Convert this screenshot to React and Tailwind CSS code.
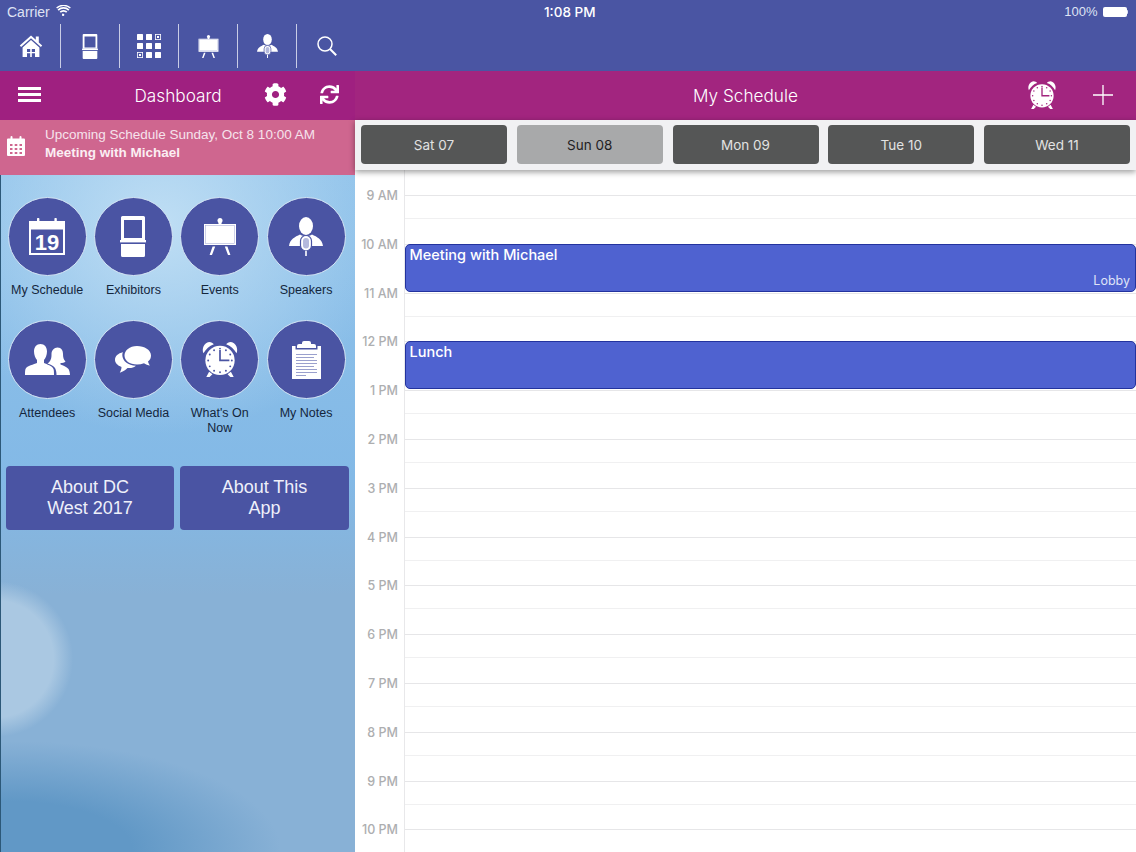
import { FaCog, FaSync } from 'react-icons/fa'

const HORAS = ['9 AM', '10 AM', '11 AM', '12 PM', '1 PM', '2 PM', '3 PM', '4 PM', '5 PM', '6 PM', '7 PM', '8 PM', '9 PM', '10 PM']

const DIAS = [
  { nombre: 'Sat 07' },
  { nombre: 'Sun 08', activo: true },
  { nombre: 'Mon 09' },
  { nombre: 'Tue 10' },
  { nombre: 'Wed 11' },
]

function IconHome({ className }) {
  return (
    <svg viewBox="0 0 24 24" className={className} fill="currentColor">
      <path d="M12 1.500 0.800 11.600l1.300 1.500L12 4.200l9.900 8.900 1.300-1.500-3.400-3.100V2.400h-3v3.400z" />
      <path fillRule="evenodd" d="M12 6 3.600 13.500V23h16.800v-9.500zM8 15h3.200v3H8zm4.800 0H16v3h-3.200zM8 19.200h3.200V23H8zm4.800 0H16V23h-3.200z" />
    </svg>
  )
}

function IconKiosk({ className }) {
  return (
    <svg viewBox="0 0 26 41" className={className} fill="currentColor">
      <path fillRule="evenodd" d="M1 1.500A1.500 1.500 0 0 1 2.500 0h21A1.500 1.500 0 0 1 25 1.500V24H1zM4 4v18h18V4z" />
      <rect x="0" y="24" width="26" height="2.400" />
      <path d="M1 28h24v11.500a1.500 1.500 0 0 1-1.500 1.500h-21A1.500 1.500 0 0 1 1 39.500z" />
    </svg>
  )
}

function IconGrid({ className }) {
  const celdas = [
    [0, 0], [9, 0], [0, 9], [9, 9], [18, 9], [9, 18], [18, 18],
  ]
  return (
    <svg viewBox="0 0 24 24" className={className} fill="currentColor">
      {celdas.map(([x, y]) => (
        <rect key={`${x}-${y}`} x={x} y={y} width="6" height="6" rx="0.500" />
      ))}
      <rect x="18.400" y="0.400" width="5.200" height="5.200" fill="none" stroke="currentColor" strokeWidth="0.800" />
      <rect x="20" y="2" width="2" height="2" />
      <rect x="0.400" y="18.400" width="5.200" height="5.200" fill="none" stroke="currentColor" strokeWidth="0.800" />
      <rect x="2" y="20" width="2" height="2" />
    </svg>
  )
}

function IconEasel({ className }) {
  return (
    <svg viewBox="0 0 32 37" className={className} fill="currentColor">
      <circle cx="16" cy="2.500" r="2.500" />
      <rect x="14.500" y="3" width="3" height="4" />
      <rect x="0" y="6" width="32" height="21" />
      <rect x="1.600" y="7.600" width="28.800" height="17.800" fill="none" stroke="#aeb3da" strokeWidth="0.600" />
      <path d="M8.600 28.500h2.600L8 37H5.600zM20.800 28.500h2.600l3 8.500H24z" />
    </svg>
  )
}

function IconSpeaker({ className }) {
  return (
    <svg viewBox="0 0 34 39" className={className} fill="currentColor">
      <ellipse cx="17" cy="9" rx="7" ry="9" />
      <path d="M11 17.500C6 20 1 22 0 29h34c-1-7-6-9-11-11.500-3 2-9 2-12 0z" />
      <rect x="11.500" y="18.500" width="11" height="15.500" rx="5.500" fill="#ffffff" stroke="#4a54a3" strokeWidth="1.200" />
      <rect x="14" y="21" width="6" height="10.500" rx="3" fill="#b4b9dd" />
      <rect x="16.200" y="34" width="1.600" height="5" />
    </svg>
  )
}

function IconSearch({ className }) {
  return (
    <svg viewBox="0 0 20 20" className={className} fill="none" stroke="currentColor" strokeWidth="1.500">
      <circle cx="8" cy="8" r="7" />
      <path d="m13 13 6.200 6.200" strokeWidth="2" />
    </svg>
  )
}

function IconCalendarDots({ className }) {
  return (
    <svg viewBox="0 0 18 20" className={className} fill="currentColor">
      <path fillRule="evenodd" d="M1 2.500h2.500V1a1 1 0 0 1 2 0v1.500h7V1a1 1 0 0 1 2 0v1.500H17a1 1 0 0 1 1 1V19a1 1 0 0 1-1 1H1a1 1 0 0 1-1-1V3.500a1 1 0 0 1 1-1zM3 8v2h2.500V8zm4.700 0v2h2.600V8zm4.800 0v2H15V8zM3 12v2h2.500v-2zm4.700 0v2h2.600v-2zm4.800 0v2H15v-2zM3 16v2h2.500v-2zm4.700 0v2h2.600v-2zm4.800 0v2H15v-2z" />
    </svg>
  )
}

function IconCalendar19({ className }) {
  return (
    <svg viewBox="0 0 36 37" className={className}>
      <path fill="currentColor" fillRule="evenodd" d="M0 3h8V1a1.200 1.200 0 0 1 2.400 0v2h15V1a1.200 1.200 0 0 1 2.400 0v2H36v34H0zM2 11.500V35h32V11.500z" />
      <text x="18" y="31.500" textAnchor="middle" fill="currentColor" fontSize="22" fontWeight="700" fontFamily="'Liberation Sans', sans-serif">19</text>
    </svg>
  )
}

function IconAttendees({ className }) {
  return (
    <svg viewBox="0 0 45 31" className={className} fill="currentColor">
      <path d="M15.500 0c4 0 6.500 3 6.500 7.500 0 3.500-1.500 7-3 8.500v3c3 1.500 8 2.500 9.500 6 .5 1.500.5 3.500.5 6H0c0-2.500 0-4.500.5-6C2 21.500 9 20.500 12 19v-3c-1.500-1.500-3-5-3-8.500C9 3 11.500 0 15.500 0z" />
      <path d="M32.500 3.500c4 0 5.500 3 5.500 6.500 0 3 .5 5.500 2.500 7.500-1 1-3 1.500-5 1.500v1.500c2.500 1 6 2 8 4.500.8 1.200 1.500 4 1.500 6H31.500c0-3-.5-5-1.500-7-1.300-2.500-5-3.500-7.500-4.500 1.500-1 2.500-2.200 3-3.500 1-2 1-4 1-6 0-3.500 2.500-6.500 6-6.500z" />
    </svg>
  )
}

function IconBubbles({ className }) {
  return (
    <svg viewBox="0 0 36 27" className={className} fill="currentColor">
      <path d="M22 0c7.500 0 14 4 14 9.500 0 2.500-1 4.500-3 6 .3 1.500 1.200 3 2 4-2 0-4.500-1-6-2.200-2.200.8-4.500 1.200-7 1.200-7.500 0-12.500-4-12.500-9S14.500 0 22 0z" />
      <path d="M8 6.300C7.500 7.200 7.300 8 7.300 9c0 5.800 5.700 10.500 13.700 10.700-2 1.700-5 2.700-8.500 2.300-2 2-4.500 3.800-7.700 4.700 1-1.700 1.700-3.700 1.700-5.700C2.500 19.500 0 17 0 13.800 0 10.300 3 7.300 8 6.300z" />
    </svg>
  )
}

function IconAlarm({ className, fondo }) {
  const marcas = [0, 1, 2, 3, 4, 5, 6, 7, 8, 9, 10, 11]
  return (
    <svg viewBox="0 0 40 37" className={className} fill="currentColor">
      <path d="M2.500 12C.5 7 3 1 8.500 0c2.500 0 4 1 5 2.500C8.500 4 5.500 7.500 2.500 12zM37.500 12c2-5-.5-11-6-12-2.500 0-4 1-5 2.500C31.500 4 34.500 7.500 37.500 12z" />
      <circle cx="20" cy="19.500" r="15.500" />
      <path d="M8.500 31.500 5.500 37h3.500l3-3zM31.500 31.500l3 5.500H31l-3-3z" />
      {marcas.map((m) => {
        const a = (m * Math.PI) / 6
        return <circle key={m} cx={20 + 12.500 * Math.sin(a)} cy={19.500 - 12.500 * Math.cos(a)} r="1" fill={fondo} />
      })}
      <path d="M19.100 8.500h1.800v10.100h9v1.800H19.100z" fill={fondo} />
    </svg>
  )
}

function IconNotes({ className }) {
  const lineas = [13, 16, 19, 22, 25, 28, 31, 34]
  return (
    <svg viewBox="0 0 29 38" className={className} fill="currentColor">
      <path d="M10 3V2a2 2 0 0 1 2-2h5a2 2 0 0 1 2 2v1h3a2 2 0 0 1 2 2v2H5V5a2 2 0 0 1 2-2z" />
      <path d="M0 5h3.500v3.500h22V5H29v33H0z" />
      {lineas.map((y, i) => (
        <rect key={y} x="4" y={y} width={i === 7 ? 10 : i % 3 === 1 ? 18 : 21} height="0.900" fill="#8f96c8" />
      ))}
    </svg>
  )
}

function BotonCirculo({ etiqueta, children }) {
  return (
    <div className="flex flex-col items-center">
      <div className="flex h-[79px] w-[79px] items-center justify-center rounded-full border-[1.500px] border-[#d5e6f5] bg-[#4a54a3] text-white">
        {children}
      </div>
      <p className="mt-[7px] text-center text-[12.500px] leading-[14.500px] text-[#14263c]">{etiqueta}</p>
    </div>
  )
}

function CeldaToolbar({ children, ultima }) {
  return (
    <div className={`flex h-[44px] w-[59px] items-center justify-center text-white ${ultima ? '' : 'border-r border-[#c9cde6]'}`}>
      {children}
    </div>
  )
}

function Evento({ titulo, lugar, className }) {
  return (
    <div className={`absolute right-0 left-[49.500px] h-[48px] rounded-[5px] border border-[#23339e] bg-[#4f62d0] font-['Inter',sans-serif] text-white ${className}`}>
      <p className="pl-[4px] pt-[1px] text-[14.500px] font-medium leading-[18px]">{titulo}</p>
      {lugar && <p className="absolute right-[5px] bottom-[2px] text-[12.500px] leading-[16px] text-[#dfe3f7]">{lugar}</p>}
    </div>
  )
}

export default function App() {
  return (
    <div className="flex h-[852px] w-[1136px] flex-col overflow-hidden bg-white font-['Liberation_Sans',sans-serif]">
      {/* barra azul de arriba */}
      <div className="h-[71px] flex-shrink-0 bg-[#4a55a3]">
        <div className="relative flex h-[24px] items-center justify-between pr-[8px] pl-[7px] text-[13px] text-[#dfe3f4]">
          <div className="flex items-center gap-[6px]">
            <span className="text-[14px]">Carrier</span>
            <svg viewBox="0 0 16 12" className="mb-[3px] h-[11px] w-[15px] text-white" fill="currentColor">
              <path d="M8 9.500a1.300 1.300 0 1 0 0 2.500 1.300 1.300 0 0 0 0-2.500zM3.800 7.200l1.300 1.300a4 4 0 0 1 5.800 0l1.300-1.300a6 6 0 0 0-8.400 0zM1.500 4.900l1.300 1.300a7.300 7.300 0 0 1 10.400 0l1.300-1.300a9.200 9.200 0 0 0-13 0zM0 2.700 1 3.800a10.200 10.200 0 0 1 14 0l1-1.100A12 12 0 0 0 0 2.700z" />
            </svg>
          </div>
          <span className="absolute left-[544px] font-['Inter',sans-serif] text-[13.500px] font-medium text-white">1:08 PM</span>
          <div className="flex items-center gap-[5px]">
            <span>100%</span>
            <div className="flex items-center">
              <div className="h-[10px] w-[24px] rounded-[2px] bg-white" />
              <div className="h-[4px] w-[1.500px] rounded-r-sm bg-[#dfe3f4]" />
            </div>
          </div>
        </div>
        <div className="flex pl-[2px]">
          <CeldaToolbar><IconHome className="h-[24px] w-[24px]" /></CeldaToolbar>
          <CeldaToolbar><IconKiosk className="h-[25px] w-[16px]" /></CeldaToolbar>
          <CeldaToolbar><IconGrid className="h-[24px] w-[24px]" /></CeldaToolbar>
          <CeldaToolbar><IconEasel className="h-[23px] w-[21px]" /></CeldaToolbar>
          <CeldaToolbar><IconSpeaker className="h-[24px] w-[21px]" /></CeldaToolbar>
          <CeldaToolbar ultima><IconSearch className="h-[20px] w-[20px]" /></CeldaToolbar>
        </div>
      </div>

      {/* barra morada */}
      <div className="flex h-[49px] flex-shrink-0 text-white">
        <div className="flex w-[355px] items-center bg-[#9f2080]">
          <div className="mb-[2px] ml-[18px] flex w-[23px] flex-col gap-[2.500px]">
            <div className="h-[3.500px] bg-white" />
            <div className="h-[3.500px] bg-white" />
            <div className="h-[3.500px] bg-white" />
          </div>
          <p className="mt-[1px] ml-[93.500px] w-[88px] font-['Inter',sans-serif] text-[17.200px] font-light">Dashboard</p>
          <FaCog className="mb-[2px] ml-[41px] h-[23px] w-[23px]" />
          <FaSync className="mb-[2px] ml-[33px] h-[19px] w-[19px]" />
        </div>
        <div className="relative flex flex-1 items-center justify-center bg-[#a2257f]">
          <p className="mt-[1px] font-['Inter',sans-serif] text-[17.200px] font-light">My Schedule</p>
          <IconAlarm className="absolute left-[672px] top-[10px] h-[28px] w-[30px]" fondo="#a2257f" />
          <svg viewBox="0 0 20 20" className="absolute left-[738px] top-[14px] h-[20px] w-[20px]" stroke="currentColor" strokeWidth="1.300">
            <path d="M10 0v20M0 10h20" />
          </svg>
        </div>
      </div>

      <div className="flex min-h-0 flex-1">
        {/* panel izquierdo */}
        <div className="flex w-[355px] flex-shrink-0 flex-col">
          <div className="flex h-[55px] flex-shrink-0 bg-[#cf668f] text-white">
            <IconCalendarDots className="mt-[16px] ml-[7px] h-[20px] w-[18px]" />
            <div className="ml-[20px] pt-[6px] text-[13.500px] leading-[18px]">
              <p className="text-[#f6e3ec]">Upcoming Schedule Sunday, Oct 8 10:00 AM</p>
              <p className="font-bold text-[#fbeef3]">Meeting with Michael</p>
            </div>
          </div>
          <div className="flex-1 border-l border-[#2c5878] bg-[#88b1d6] bg-[radial-gradient(circle_78px_at_-6px_484px,#aac8e2_75%,transparent_100%),radial-gradient(ellipse_270px_110px_at_10px_676px,#6198c6_45%,transparent_100%),radial-gradient(ellipse_230px_210px_at_160px_50px,#bfdef4_0%,transparent_100%),linear-gradient(180deg,#8fc2ea_0%,#83b9e6_45%,#88b1d6_62%)]">
            <div className="grid grid-cols-[86.300px_86.300px_86.300px_86.300px] pl-[3px] pt-[22px]">
              <div className="h-[123px]">
                <BotonCirculo etiqueta="My Schedule"><IconCalendar19 className="h-[37px] w-[36px]" /></BotonCirculo>
              </div>
              <BotonCirculo etiqueta="Exhibitors"><IconKiosk className="h-[41px] w-[26px]" /></BotonCirculo>
              <BotonCirculo etiqueta="Events"><IconEasel className="h-[37px] w-[32px]" /></BotonCirculo>
              <BotonCirculo etiqueta="Speakers"><IconSpeaker className="h-[39px] w-[34px]" /></BotonCirculo>
              <BotonCirculo etiqueta="Attendees"><IconAttendees className="h-[31px] w-[45px]" /></BotonCirculo>
              <BotonCirculo etiqueta="Social Media"><IconBubbles className="h-[27px] w-[36px]" /></BotonCirculo>
              <BotonCirculo etiqueta={<>What's On<br />Now</>}><IconAlarm className="h-[35px] w-[38px]" fondo="#4a54a3" /></BotonCirculo>
              <BotonCirculo etiqueta="My Notes"><IconNotes className="h-[38px] w-[29px]" /></BotonCirculo>
            </div>
            <div className="mt-[31px] flex gap-[6px] pl-[5px]">
              <div className="flex h-[64px] w-[168px] items-center justify-center rounded-[4px] bg-[#4a54a3] text-center text-[18px] leading-[21px] text-[#eef0fa]">
                About DC<br />West 2017
              </div>
              <div className="flex h-[64px] w-[169px] items-center justify-center rounded-[4px] bg-[#4a54a3] text-center text-[18px] leading-[21px] text-[#eef0fa]">
                About This<br />App
              </div>
            </div>
          </div>
        </div>

        {/* agenda */}
        <div className="flex min-w-0 flex-1 flex-col">
          <div className="z-10 flex h-[50px] flex-shrink-0 justify-between bg-[#f1f1f3] px-[6px] pt-[5px] shadow-[0_2px_6px_rgba(0,0,0,0.4)]">
            {DIAS.map((dia) => (
              <div
                key={dia.nombre}
                className={`flex h-[39px] w-[146px] items-center justify-center rounded-[4px] pt-[1px] font-['Inter',sans-serif] text-[13.500px] ${
                  dia.activo ? 'bg-[#a8a9aa] text-[#1f2123]' : 'bg-[#555656] text-[#e2e2e2]'
                }`}
              >
                {dia.nombre}
              </div>
            ))}
          </div>
          <div className="relative flex-1 pt-[25px]">
            <div className="absolute top-0 bottom-0 left-[49px] w-px bg-[#e8e8ea]" />
            {HORAS.map((hora) => (
              <div key={hora} className="flex h-[48.800px]">
                <div className="w-[50px] flex-shrink-0 pr-[7px] text-right font-['Inter',sans-serif] text-[12.500px] font-medium leading-[16px] text-[#adaeb0]">
                  <p className="-translate-y-[7px]">{hora}</p>
                </div>
                <div className="flex-1 border-t-[1.500px] border-[#e6e6e8]">
                  <div className="h-[23px] border-b border-[#f0f0f1]" />
                </div>
              </div>
            ))}
            <Evento titulo="Meeting with Michael" lugar="Lobby" className="top-[74px]" />
            <Evento titulo="Lunch" className="top-[171px]" />
          </div>
        </div>
      </div>
    </div>
  )
}
